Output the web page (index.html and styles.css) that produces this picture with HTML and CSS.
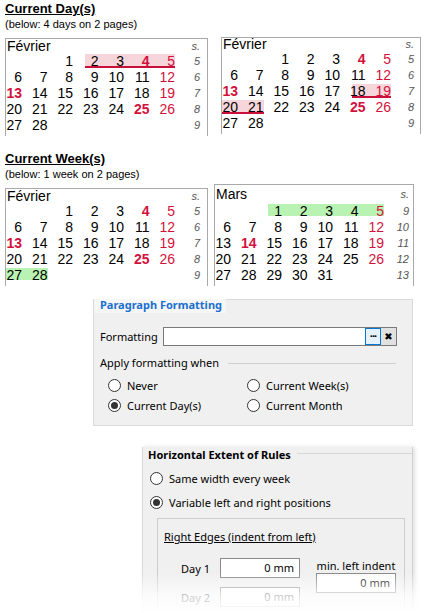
FILE: index.html
```html
<!DOCTYPE html>
<html lang="fr">
<head>
<meta charset="utf-8">
<title>Calendar highlight</title>
<link rel="stylesheet" href="styles.css">
</head>
<body>
<section class="sec">
  <h2 class="title">Current Day(s)</h2>
  <p class="sub">(below: 4 days on 2 pages)</p>
  <div class="cals">
    <div class="cal">
      <div class="month">Février</div><div class="wk">s.</div>
      <span></span><span></span><span>1</span><span class="hl hs">2</span><span class="hl">3</span><span class="hl b">4</span><span class="hl r">5</span><span class="wk">5</span>
      <span>6</span><span>7</span><span>8</span><span>9</span><span>10</span><span>11</span><span class="r">12</span><span class="wk">6</span>
      <span class="b">13</span><span>14</span><span>15</span><span>16</span><span>17</span><span>18</span><span class="r">19</span><span class="wk">7</span>
      <span>20</span><span>21</span><span>22</span><span>23</span><span>24</span><span class="b">25</span><span class="r">26</span><span class="wk">8</span>
      <span>27</span><span>28</span><span class="wk">9</span>
    </div>
    <div class="cal cal-b">
      <div class="month">Février</div><div class="wk">s.</div>
      <span></span><span></span><span>1</span><span>2</span><span>3</span><span class="b">4</span><span class="r">5</span><span class="wk">5</span>
      <span>6</span><span>7</span><span>8</span><span>9</span><span>10</span><span>11</span><span class="r">12</span><span class="wk">6</span>
      <span class="b">13</span><span>14</span><span>15</span><span>16</span><span>17</span><span class="hl hs">18</span><span class="hl r">19</span><span class="wk">7</span>
      <span class="hl">20</span><span class="hl">21</span><span>22</span><span>23</span><span>24</span><span class="b">25</span><span class="r">26</span><span class="wk">8</span>
      <span>27</span><span>28</span><span class="wk">9</span>
    </div>
  </div>
</section>

<section class="sec">
  <h2 class="title">Current Week(s)</h2>
  <p class="sub">(below: 1 week on 2 pages)</p>
  <div class="cals">
    <div class="cal">
      <div class="month">Février</div><div class="wk">s.</div>
      <span></span><span></span><span>1</span><span>2</span><span>3</span><span class="b">4</span><span class="r">5</span><span class="wk">5</span>
      <span>6</span><span>7</span><span>8</span><span>9</span><span>10</span><span>11</span><span class="r">12</span><span class="wk">6</span>
      <span class="b">13</span><span>14</span><span>15</span><span>16</span><span>17</span><span>18</span><span class="r">19</span><span class="wk">7</span>
      <span>20</span><span>21</span><span>22</span><span>23</span><span>24</span><span class="b">25</span><span class="r">26</span><span class="wk">8</span>
      <span class="gr">27</span><span class="gr">28</span><span class="wk">9</span>
    </div>
    <div class="cal cal-m">
      <div class="month">Mars</div><div class="wk">s.</div>
      <span></span><span></span><span class="gr gs">1</span><span class="gr">2</span><span class="gr">3</span><span class="gr">4</span><span class="gr r">5</span><span class="wk">9</span>
      <span>6</span><span>7</span><span>8</span><span>9</span><span>10</span><span>11</span><span class="r">12</span><span class="wk">10</span>
      <span>13</span><span class="b">14</span><span>15</span><span>16</span><span>17</span><span>18</span><span class="r">19</span><span class="wk">11</span>
      <span>20</span><span>21</span><span>22</span><span>23</span><span>24</span><span>25</span><span class="r">26</span><span class="wk">12</span>
      <span>27</span><span>28</span><span>29</span><span>30</span><span>31</span><span class="wk">13</span>
    </div>
  </div>
</section>

<div class="panel p1">
  <div class="ptitle">Paragraph Formatting</div>
  <div class="frow">
    <span class="flabel">Formatting</span>
    <div class="field">
      <span class="fill"></span>
      <span class="btn dots">···</span>
      <span class="btn xbtn">✖</span>
    </div>
  </div>
  <div class="sep"><span>Apply formatting when</span><i class="line"></i></div>
  <div class="radios">
    <div class="radio"><span class="rc"></span>Never</div>
    <div class="radio"><span class="rc"></span>Current Week(s)</div>
    <div class="radio"><span class="rc on"></span>Current Day(s)</div>
    <div class="radio"><span class="rc"></span>Current Month</div>
  </div>
</div>

<div class="panel p2">
  <div class="p2head"><span class="p2title">Horizontal Extent of Rules</span><i class="line"></i></div>
  <div class="radio r2"><span class="rc"></span>Same width every week</div>
  <div class="radio r2"><span class="rc on"></span>Variable left and right positions</div>
  <div class="group">
    <div class="gtitle">Right Edges (indent from left)</div>
    <div class="gbody">
      <div class="gleft">
        <div class="drow"><span class="dlabel">Day 1</span><span class="inp">0 mm</span></div>
        <div class="drow"><span class="dlabel">Day 2</span><span class="inp">0 mm</span></div>
      </div>
      <div class="gright">
        <div class="mlabel">min. left indent</div>
        <span class="inp">0 mm</span>
      </div>
    </div>
  </div>
</div>

<div class="fade"></div>
</body>
</html>
```

FILE: styles.css
```css
html, body {
  margin: 0;
  padding: 0;
}
body {
  width: 425px;
  height: 613px;
  overflow: hidden;
  position: relative;
  background: #fff;
  color: #000;
  font-family: "Liberation Sans", Arial, sans-serif;
}

.sec {
  height: 150px;
  padding-left: 5px;
  box-sizing: border-box;
}
.title {
  margin: 0;
  padding-top: 1px;
  height: 16px;
  font-size: 13px;
  line-height: 16px;
  font-weight: bold;
  text-decoration: underline;
}
.sub {
  margin: 0;
  height: 14px;
  font-size: 11px;
  line-height: 14px;
}
.cals {
  display: flex;
  align-items: flex-start;
  margin-top: 7px;
}

.cal {
  display: grid;
  grid-template-columns: 16px repeat(6, 25.5px) 25px;
  grid-template-rows: 14px repeat(5, 16px);
  padding: 0 7px 3px 0;
  border: 1px solid #a9a9a9;
  border-bottom: 0;
  font-size: 14px;
  line-height: 16px;
}
.cal > span {
  text-align: right;
  white-space: nowrap;
}
.month {
  grid-column: 1 / 8;
  line-height: 14px;
  padding-left: 1px;
}
.cal .wk {
  grid-column: 8;
  text-align: right;
  font-size: 11px;
  font-style: italic;
  color: #555;
}
.month + .wk {
  line-height: 14px;
}

.cal-b {
  margin-left: 13px;
  margin-top: -1px;
  grid-template-columns: 16px repeat(6, 25.5px) 23px;
  grid-template-rows: 13px repeat(5, 16px);
  padding-right: 6px;
}
.cal-b .month, .cal-b .month + .wk {
  line-height: 13px;
}
.cal-m {
  margin-left: 6px;
  margin-top: -4px;
  grid-template-rows: 18px repeat(5, 16px);
  padding-right: 4px;
}
.cal-m .month, .cal-m .month + .wk {
  line-height: 18px;
}

.r { color: #d3123c; }
.b { color: #d3123c; font-weight: bold; }

.hl {
  background-image: linear-gradient(#c8103a, #c8103a), linear-gradient(#f6d5db, #f6d5db);
  background-size: 100% 2px, 100% 12px;
  background-position: 0 13px, 0 1px;
  background-repeat: no-repeat;
}
.hl.hs {
  background-size: 14px 2px, 14px 12px;
  background-position: right 0 top 13px, right 0 top 1px;
}
.gr {
  background-image: linear-gradient(#b9f3b3, #b9f3b3);
  background-size: 100% 12px;
  background-position: 0 1px;
  background-repeat: no-repeat;
}
.gr.gs {
  background-size: 14px 12px;
  background-position: right 0 top 1px;
}

/* dialog panels */
.panel {
  background: #f0f0f0;
  font-family: "Noto Sans", "Segoe UI", sans-serif;
  font-size: 11px;
  color: #000;
  box-sizing: border-box;
}
.p1 {
  margin: -1px 0 0 93px;
  width: 320px;
  border: 1px solid #dadada;
  padding-bottom: 10px;
}
.ptitle {
  display: inline-block;
  vertical-align: top;
  margin-top: -1px;
  padding: 0 4px 0 6px;
  height: 14px;
  line-height: 12px;
  background: #f6f6f6;
  color: #1b6fcf;
  font-weight: bold;
}
.frow {
  display: flex;
  align-items: center;
  margin-top: 12px;
  padding-left: 6px;
}
.flabel {
  width: 63px;
}
.field {
  display: flex;
  width: 234px;
  height: 19px;
  box-sizing: border-box;
  border: 1px solid #7a7a7a;
  background: #fff;
}
.fill { flex: 1; }
.btn {
  width: 15px;
  display: flex;
  align-items: center;
  justify-content: center;
  box-sizing: border-box;
  font-weight: bold;
  font-size: 10px;
  line-height: 1;
}
.dots {
  width: 16px;
  border: 1px solid #0078d7;
  background: #e5f1fb;
  letter-spacing: -1px;
  font-size: 11px;
  padding-bottom: 2px;
}
.xbtn {
  background: #e1e1e1;
  font-family: "DejaVu Sans", sans-serif;
  font-size: 10px;
}
.sep {
  display: flex;
  align-items: center;
  margin-top: 10px;
  padding-left: 6px;
  padding-right: 16px;
  line-height: 14px;
}
.line {
  flex: 1;
  height: 1px;
  background: #cfcfcf;
  margin-left: 9px;
}
.radios {
  display: grid;
  grid-template-columns: 139px 1fr;
  grid-auto-rows: 20px;
  margin-top: 5px;
  padding-left: 14px;
}
.radio {
  display: flex;
  align-items: center;
}
.rc {
  width: 13px;
  height: 13px;
  box-sizing: border-box;
  border: 1px solid #333;
  border-radius: 50%;
  background: #fff;
  margin-right: 6px;
  display: flex;
  align-items: center;
  justify-content: center;
}
.rc.on::after {
  content: "";
  width: 7px;
  height: 7px;
  border-radius: 50%;
  background: #333;
}

.p2 {
  margin: 21px 0 0 142px;
  width: 271px;
  height: 166px;
  overflow: hidden;
  border-left: 1px solid #dadada;
  border-right: 1px solid #d0d0d0;
  box-shadow: 2px 0 4px rgba(0, 0, 0, 0.12);
  padding-top: 1px;
}
.p2head {
  display: flex;
  align-items: center;
  height: 14px;
  padding-left: 5px;
}
.p2title {
  font-weight: bold;
  line-height: 14px;
}
.p2head .line {
  margin-left: 6px;
  margin-top: -4px;
  background: #d8d8d8;
}
.r2 {
  height: 24px;
  padding-left: 7px;
}
.p2head + .r2 {
  margin-top: 4px;
}
.group {
  margin: 4px 7px 0 14px;
  border: 1px solid #cdcdcd;
  border-bottom: 0;
  padding: 11px 0 6px 0;
}
.gtitle {
  padding-left: 6px;
  line-height: 14px;
  text-decoration: underline;
}
.gbody {
  display: flex;
  margin-top: 14px;
}
.gleft {
  display: flex;
  flex-direction: column;
  gap: 9px;
}
.drow {
  display: flex;
  align-items: center;
}
.dlabel {
  width: 52px;
  text-align: right;
  margin-right: 10px;
}
.inp {
  display: block;
  width: 80px;
  height: 20px;
  box-sizing: border-box;
  border: 1px solid #8a8a8a;
  background: #fff;
  text-align: right;
  padding-right: 5px;
  line-height: 18px;
}
.gright {
  margin-left: 16px;
}
.mlabel {
  line-height: 15px;
  text-align: center;
  width: 80px;
}

.fade {
  position: absolute;
  left: 0;
  right: 0;
  bottom: 0;
  height: 40px;
  background: linear-gradient(rgba(255, 255, 255, 0), rgba(255, 255, 255, 0.75) 55%, #fff);
}
```
